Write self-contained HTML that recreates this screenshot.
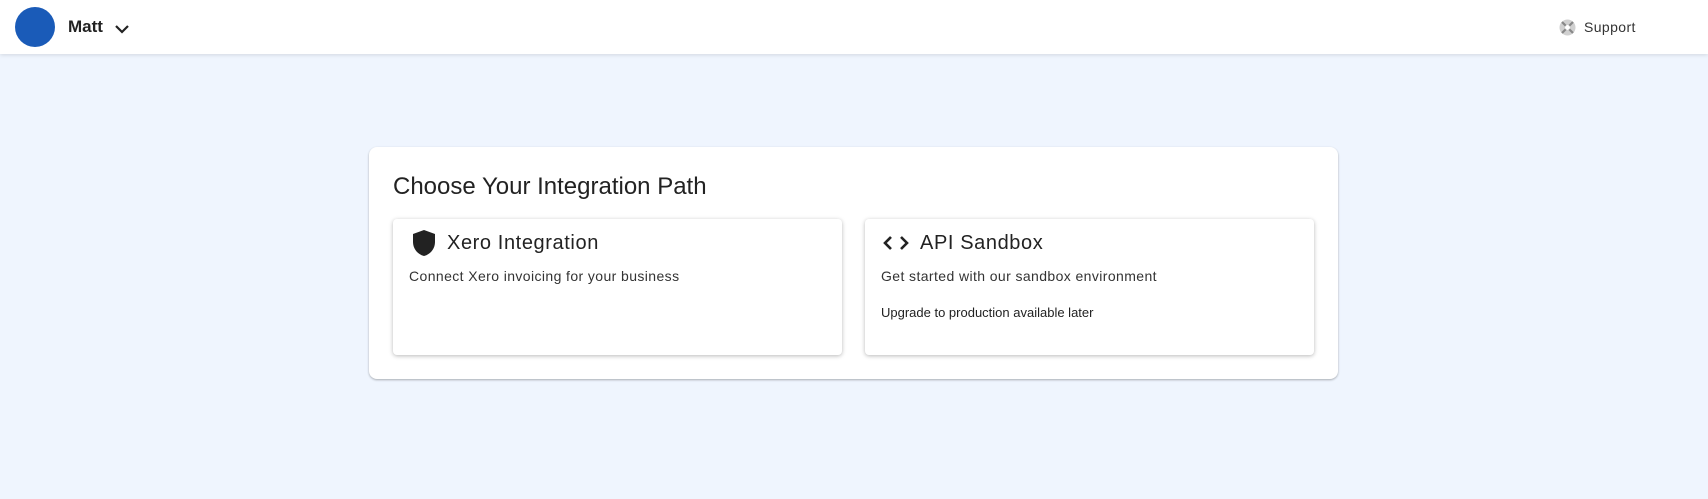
<!DOCTYPE html>
<html><head><meta charset="utf-8"><style>
*{margin:0;padding:0;box-sizing:border-box}
html,body{width:1708px;height:499px;overflow:hidden;background:#eff5fe;font-family:"Liberation Sans",sans-serif;color:#222}
.hdr{position:absolute;left:0;top:0;width:1708px;height:54px;background:#fff;box-shadow:0 1px 4px rgba(0,0,0,.12)}
.av{position:absolute;left:15px;top:7px;width:40px;height:40px;border-radius:50%;background:#1a5bb8}
.name{position:absolute;left:68px;top:17px;font-size:17px;font-weight:bold;color:#222}
.chev{position:absolute;left:114px;top:24px}
.sup{position:absolute;left:1559px;top:19px}
.supt{position:absolute;left:1584px;top:19px;font-size:14px;letter-spacing:.4px;color:#333}
.card{position:absolute;left:369px;top:147px;width:969px;height:232px;background:#fff;border-radius:8px;box-shadow:0 1px 2px rgba(0,0,0,.3)}
.title{position:absolute;left:24px;top:26px;font-size:24px;color:#222}
.sub{position:absolute;top:72px;width:449px;height:136px;background:#fff;border-radius:4px;box-shadow:0 1px 4px rgba(0,0,0,.28)}
.st{position:absolute;top:13px;font-size:20px;letter-spacing:.6px;color:#222}
.sd{position:absolute;left:16px;top:49px;font-size:14px;letter-spacing:.4px;color:#333}
.sn{position:absolute;left:16px;top:86px;font-size:13px;color:#222}
</style></head><body>
<div class="hdr">
<div class="av"></div>
<div class="name">Matt</div>
<svg class="chev" width="16" height="10" viewBox="0 0 16 10"><path d="M2 2l6 6 6-6" fill="none" stroke="#222" stroke-width="2.2"/></svg>
<svg class="sup" width="17" height="17" viewBox="0 0 17 17"><circle cx="8.5" cy="8.5" r="8" fill="#d0d0d0"/><path d="M3 3l4 4M14 3l-4 4M3 14l4-4M14 14l-4-4" stroke="#888" stroke-width="2.2"/><circle cx="8.5" cy="8.5" r="2.5" fill="#fff"/></svg>
<div class="supt">Support</div>
</div>
<div class="card">
<div class="title">Choose Your Integration Path</div>
<div class="sub" style="left:24px">
<svg style="position:absolute;left:19px;top:10px" width="24" height="28" viewBox="0 0 24 28"><path d="M12 1L1 5v8c0 7 5 12.5 11 14 6-1.5 11-7 11-14V5z" fill="#222"/></svg>
<div class="st" style="left:54px">Xero Integration</div>
<div class="sd">Connect Xero invoicing for your business</div>
</div>
<div class="sub" style="left:496px">
<svg style="position:absolute;left:17px;top:16px" width="28" height="16" viewBox="0 0 28 16"><path d="M9 2L3 8l6 6M19 2l6 6-6 6" fill="none" stroke="#222" stroke-width="2.6"/></svg>
<div class="st" style="left:55px">API Sandbox</div>
<div class="sd">Get started with our sandbox environment</div>
<div class="sn">Upgrade to production available later</div>
</div>
</div>
</body></html>
